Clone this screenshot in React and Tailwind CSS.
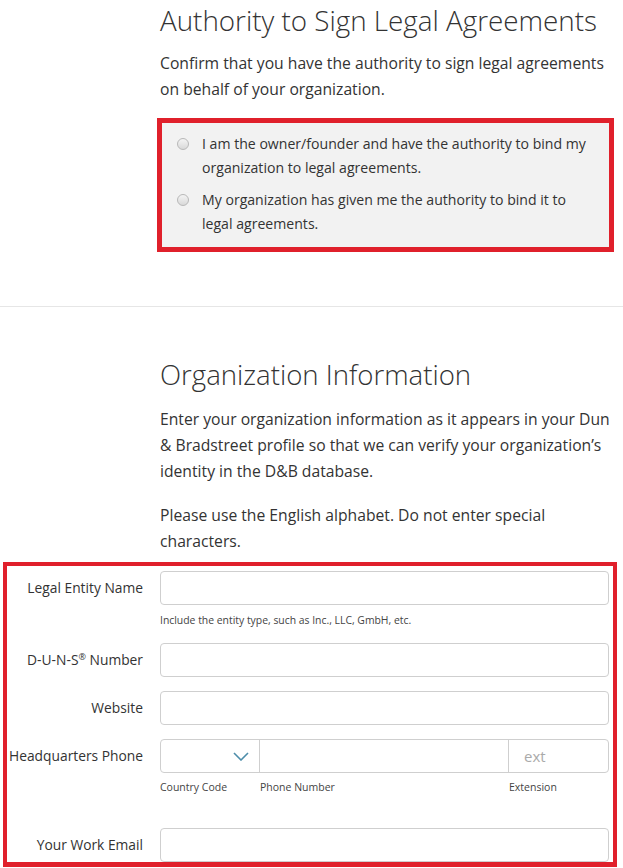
import React from 'react';

const font = { fontFamily: '"Open Sans", "Noto Sans", sans-serif' };

function Radio({ children }) {
  return (
    <label className="flex items-start gap-[13px]">
      <span className="mt-[6px] w-[12px] h-[12px] shrink-0 rounded-full border border-[#b8b8b8] bg-gradient-to-b from-[#f4f4f4] to-[#d9d9d9]"></span>
      <span className="text-[14.1px] leading-[24px] text-[#333]">{children}</span>
    </label>
  );
}

function Field({ label, children, hint }) {
  return (
    <div className="flex items-start">
      <div className="w-[136px] shrink-0 h-[34px] flex items-center justify-end text-[13.8px] text-[#333] whitespace-nowrap">
        {label}
      </div>
      <div className="ml-[17px] flex-1">
        {children}
        {hint}
      </div>
    </div>
  );
}

function TextInput() {
  return <input type="text" className="block w-full h-[34px] rounded-[4px] border border-[#cfcfcf] bg-white outline-none px-3 text-[14px]" />;
}

export default function App() {
  return (
    <div className="min-h-screen bg-white text-[#333] overflow-hidden" style={font}>
      {/* authority section */}
      <section className="pl-[160px] pr-[8px]">
        <h1 className="text-[27.8px] font-light leading-[40px] text-[#333] whitespace-nowrap">
          Authority to Sign Legal Agreements
        </h1>
        <p className="mt-[10px] text-[15.7px] leading-[26px]">
          Confirm that you have the authority to sign legal agreements on behalf of your organization.
        </p>
        <div className="mt-[16px] -ml-[3px] mr-[1px] border-[5px] border-[#e0202b] bg-[#f2f2f2] pl-[15px] pr-[12px] pt-[9px] pb-[11px] flex flex-col gap-[8px]">
          <Radio>I am the owner/founder and have the authority to bind my organization to legal agreements.</Radio>
          <Radio>My organization has given me the authority to bind it to legal agreements.</Radio>
        </div>
      </section>

      <hr className="mt-[54px] border-0 border-t border-[#e6e6e6]" />

      {/* organization info */}
      <section className="pl-[160px] pr-[8px] pt-[47px]">
        <h2 className="text-[27.6px] font-light leading-[40px] text-[#333]">Organization Information</h2>
        <p className="mt-[12px] text-[15.7px] leading-[26px]">
          Enter your organization information as it appears in your Dun &amp; Bradstreet profile so that we can verify your organization’s identity in the D&amp;B database.
        </p>
        <p className="mt-[18px] text-[15.7px] leading-[26px]">
          Please use the English alphabet. Do not enter special characters.
        </p>
      </section>

      <div className="mt-[8px] ml-[3px] mr-[6px] border-[4px] border-b-[5px] border-[#e0202b] pt-[5px] pr-[4px]">
        <div className="flex flex-col">
          <Field
            label="Legal Entity Name"
            hint={<p className="mt-[8px] text-[10.4px] leading-[14px] text-[#444]">Include the entity type, such as Inc., LLC, GmbH, etc.</p>}
          >
            <TextInput />
          </Field>
          <div className="mt-[16px]">
            <Field label={<span>D-U-N-S<sup className="text-[9px]">®</sup> Number</span>}>
              <TextInput />
            </Field>
          </div>
          <div className="mt-[14px]">
            <Field label="Website">
              <TextInput />
            </Field>
          </div>
          <div className="mt-[14px]">
            <Field
              label="Headquarters Phone"
              hint={
                <div className="mt-[7px] flex text-[10.5px] leading-[14px] text-[#444]">
                  <span className="w-[100px]">Country Code</span>
                  <span className="flex-1">Phone Number</span>
                  <span className="w-[100px]">Extension</span>
                </div>
              }
            >
              <div className="flex h-[34px] rounded-[4px] border border-[#cfcfcf] bg-white">
                <div className="w-[99px] flex items-center justify-end pr-[10px] border-r border-[#cfcfcf]">
                  <svg width="16" height="9" viewBox="0 0 16 9" fill="none">
                    <path d="M1 1l7 7 7-7" stroke="#4d8daa" strokeWidth="1.6" />
                  </svg>
                </div>
                <div className="flex-1 border-r border-[#cfcfcf]"></div>
                <div className="w-[99px] flex items-center pl-[15px] text-[15px] text-[#aaa]">ext</div>
              </div>
            </Field>
          </div>
          <div className="mt-[34px]">
            <Field label="Your Work Email">
              <TextInput />
            </Field>
          </div>
        </div>
      </div>
    </div>
  );
}
